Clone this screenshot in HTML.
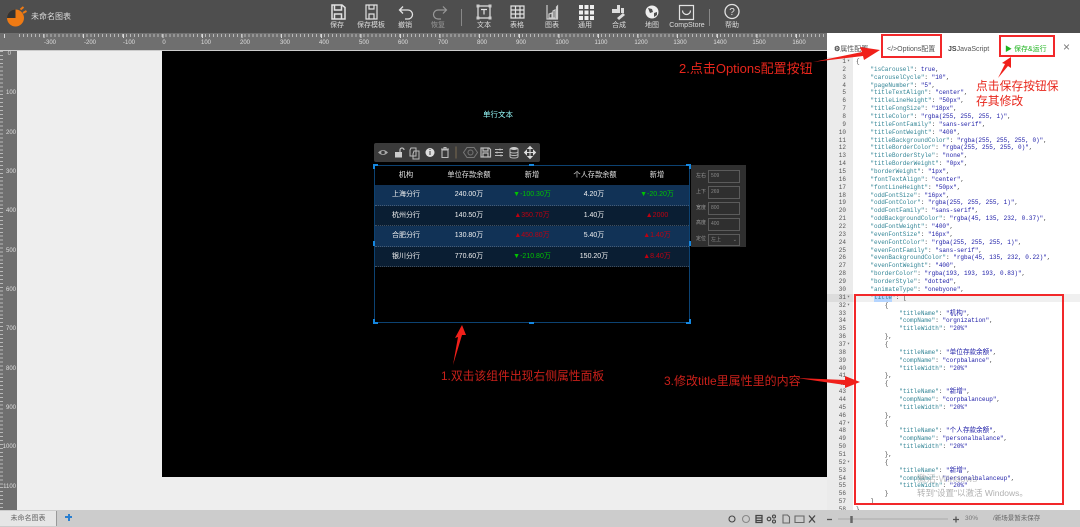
<!DOCTYPE html>
<html lang="zh"><head><meta charset="utf-8"><title>未命名图表</title>
<style>
*{margin:0;padding:0;box-sizing:border-box}
html,body{width:1080px;height:527px;overflow:hidden;background:#eee;font-family:"Liberation Sans","Noto Sans CJK SC",sans-serif}
.a{position:absolute}
#top{left:0;top:0;width:1080px;height:33px;background:#4e4e4e}
.lb{position:absolute;top:21px;font-size:7px;line-height:9px;color:#ddd;transform:translateX(-50%);white-space:nowrap}
#rt{left:0;top:33px;width:827px;height:18px;background:#6f6f6f;border-bottom:1px solid #ccc}
#rt .ticks{position:absolute;left:19px;top:1px;width:808px;height:2.500px;background:repeating-linear-gradient(90deg,#b8b8b8 0 1px,transparent 1px 3.96px)}
#rt .maj{position:absolute;left:3.600px;top:1px;width:823px;height:4px;background:repeating-linear-gradient(90deg,#d8d8d8 0 1px,transparent 1px 39.6px)}
.rl{position:absolute;top:39px;font-size:6px;line-height:8px;color:#ddd;transform:translateX(-50%)}
#rl{left:0;top:51px;width:17px;height:459px;background:#6f6f6f}
#rl .ticks{position:absolute;left:0;top:0;width:3px;height:459px;background:repeating-linear-gradient(180deg,#b8b8b8 0 1px,transparent 1px 3.93px)}
.rv{position:absolute;right:1px;font-size:6px;line-height:8px;color:#ddd}
#cv{left:162px;top:51px;width:665px;height:426px;background:#000}
#panel{left:827px;top:33px;width:253px;height:477px;background:#fff}
.tab{position:absolute;top:12px;font-size:7px;line-height:10px;color:#555;white-space:nowrap}
#gut{left:827px;top:57px;width:26px;height:453px;background:#ebebeb}
pre{position:absolute;font-family:"Liberation Mono","Noto Sans CJK SC",monospace;font-size:6px;line-height:7.86px;white-space:pre}
#nums{left:827px;top:58px;width:19px;text-align:right;color:#555}
#code{left:856px;top:58px;color:#444}
#code i{font-style:normal;color:#318495}
#code b{font-weight:normal;color:#1a1aa6}
#code u{text-decoration:none;font-size:6.600px;line-height:1px}
.tc{position:absolute;transform:translateX(-50%);white-space:nowrap;font-size:7px;line-height:10px;color:#f2f2f2}
.hd{font-size:7.200px;color:#e0e0e0}
.row{position:absolute;left:375px;width:314px;height:20.5px;border-bottom:1px dotted rgba(193,193,193,.3)}
.up{color:#c00010}.dn{color:#00c400}
.pl{position:absolute;left:696px;font-size:5px;line-height:7px;color:#999}
.pi{position:absolute;left:708px;width:32px;height:12.5px;border:1px solid #5b5b5b;font-size:5px;line-height:10px;padding-left:2px;color:#888}
.ann{position:absolute;color:#e8261c;white-space:nowrap;font-family:"Liberation Sans","Noto Sans CJK SC",sans-serif;line-height:15px}
.rbox{position:absolute;border:2px solid #f2282a}
.h{position:absolute;background:#1587e0}
#bot{left:0;top:510px;width:1080px;height:17px;background:#ccc}
</style></head><body>

<div class="a" id="top"></div>
<svg class="a" style="left:5px;top:5px" width="24" height="24" viewBox="0 0 24 24"><circle cx="10.500" cy="13" r="8.500" fill="#ee7a14"/><path d="M10.500 13V4.500A8.500 8.500 0 0 0 2 13z" fill="#333"/><path d="M15.500 4.500l3-2.500M18 8l3.500-2" stroke="#ee7a14" stroke-width="2"/></svg>
<div class="a" style="left:31px;top:12px;font-size:8px;line-height:10px;color:#ddd">未命名图表</div>

<svg class="a" style="left:320px;top:3px" width="430" height="18" viewBox="0 0 430 18" fill="none" stroke="#e2e2e2" stroke-width="1.200">
<path d="M12 2h10l3 2.500V16H12z M14.500 2v5h7V2M14.500 16v-5h7v5" stroke-width="1.500"/>
<path d="M46 2h11v14H46zM49 2v4h5V2M49 16v-5h5v5"/>
<path d="M80 7h8a4.500 4.500 0 0 1 0 9h-3M83 3.500L79.500 7l3.500 3.500" stroke-width="1.300"/>
<path d="M126 7h-8a4.500 4.500 0 0 0 0 9h3M123 3.500l3.500 3.500-3.500 3.500" stroke="#999"/>
<path d="M158 3h12v12h-12z M161 6.500h6M164 6.500v5"/><path d="M156.500 1.500h3v3h-3zM168.500 1.500h3v3h-3zM156.500 13.500h3v3h-3zM168.500 13.500h3v3h-3z" fill="#ccc" stroke="none"/>
<path d="M191 3h13v12h-13zM191 7h13M191 11h13M195.500 3v12M200 3v12"/>
<path d="M227 2v14h11M229 15v-4l3-1v5zM233 15V8l2-1v8zM236.500 15V4l1-1v12z" stroke="#ccc"/>
<path d="M259 2h4v4h-4zM264.500 2h4v4h-4zM270 2h4v4h-4zM259 7.500h4v4h-4zM264.500 7.500h4v4h-4zM270 7.500h4v4h-4zM259 13h4v4h-4zM264.500 13h4v4h-4zM270 13h4v4h-4z" fill="#eee" stroke="none"/>
<path d="M292 6h6v4h-6zM297 2h3v8h-3zM301 5h3v5h-3zM293 11h10M297 15l6-5 2 2-6 5z" fill="#ddd" stroke="none"/>
<circle cx="332" cy="9" r="6.500" fill="#eee" stroke="none"/><path d="M328 5l4 1 1 3-3 1zM334 10l3-1 0 3-3 2z" fill="#4e4e4e" stroke="none"/>
<path d="M359.500 2.500h14v14h-14zM362.500 7.500a4 4 0 0 0 8 0"/>
<circle cx="412" cy="8.500" r="7" stroke-width="1.300"/><text x="412" y="12" font-size="10" fill="#e2e2e2" stroke="none" text-anchor="middle" font-family="Liberation Sans">?</text>
</svg>

<div class="lb" style="left:337px">保存</div><div class="lb" style="left:371px">保存模板</div><div class="lb" style="left:405px">撤销</div><div class="lb" style="left:438px;color:#999">恢复</div><div class="lb" style="left:484px">文本</div><div class="lb" style="left:517px">表格</div><div class="lb" style="left:552px">图表</div><div class="lb" style="left:585px">通用</div><div class="lb" style="left:619px">合成</div><div class="lb" style="left:652px">地图</div><div class="lb" style="left:687px">CompStore</div><div class="lb" style="left:732px">帮助</div>
<div class="a" style="left:461px;top:9px;width:1px;height:17px;background:#888"></div>
<div class="a" style="left:709px;top:9px;width:1px;height:17px;background:#888"></div>

<div class="a" id="rt"><div class="ticks"></div><div class="maj"></div></div>
<div class="rl" style="left:50px">-300</div><div class="rl" style="left:90px">-200</div><div class="rl" style="left:129px">-100</div><div class="rl" style="left:164px">0</div><div class="rl" style="left:206px">100</div><div class="rl" style="left:245px">200</div><div class="rl" style="left:285px">300</div><div class="rl" style="left:324px">400</div><div class="rl" style="left:364px">500</div><div class="rl" style="left:403px">600</div><div class="rl" style="left:443px">700</div><div class="rl" style="left:482px">800</div><div class="rl" style="left:521px">900</div><div class="rl" style="left:562px">1000</div><div class="rl" style="left:601px">1100</div><div class="rl" style="left:641px">1200</div><div class="rl" style="left:680px">1300</div><div class="rl" style="left:720px">1400</div><div class="rl" style="left:759px">1500</div><div class="rl" style="left:799px">1600</div>

<div class="a" id="rl"><div class="ticks"></div>
<div class="rv" style="top:-1px;right:6px">0</div><div class="rv" style="top:38px">100</div><div class="rv" style="top:78px">200</div><div class="rv" style="top:117px">300</div><div class="rv" style="top:156px">400</div><div class="rv" style="top:196px">500</div><div class="rv" style="top:235px">600</div><div class="rv" style="top:274px">700</div><div class="rv" style="top:314px">800</div><div class="rv" style="top:353px">900</div><div class="rv" style="top:392px">1000</div><div class="rv" style="top:432px">1100</div></div>

<div class="a" id="cv"></div>
<div class="tc" style="left:498px;top:110px;font-size:7.500px;color:#9ff">单行文本</div>

<!-- floating toolbar -->
<div class="a" style="left:374px;top:143px;width:166px;height:19px;background:#3a3a3a;border-radius:2px"></div>
<svg class="a" style="left:374px;top:143px" width="166" height="19" viewBox="0 0 166 19" fill="none" stroke="#bbb">
<path d="M4 9.500q5-5 10 0q-5 5-10 0z" fill="#aaa" stroke="none"/><circle cx="9" cy="9.500" r="1.800" fill="#3a3a3a" stroke="none"/>
<path d="M21 9h7v5.500h-7z" fill="#ccc" stroke="none"/><path d="M26 9V7a2 2 0 0 1 4 0" stroke-width="1.300"/>
<path d="M37 5h5v8h-6V7zM40 8h5v8h-6v-5z"/>
<circle cx="56" cy="9.500" r="4.500" fill="#ddd" stroke="none"/><path d="M56 8v4M56 6v1" stroke="#3a3a3a"/>
<g transform="translate(5 0)"><path d="M63 7h6v7.500h-6zM62 6h8M65 6V4.500h2V6" stroke-width="1.100"/></g>
<path d="M82 3.500v12" stroke="#7a6a50"/>
<path d="M93 4.500h7l3.500 5-3.500 5h-7l-3.500-5z" stroke="#777"/><circle cx="96.500" cy="9.500" r="2.500" stroke="#777"/>
<g transform="translate(-3 0)"><path d="M110 5h8l1.500 1.500V14H110zM112 5v3h5V5M112 14v-4h5v4" stroke-width="1.200"/></g>
<g transform="translate(-6 0)"><path d="M127 6.500h8M127 9.500h8M127 12.500h8"/><path d="M132 5.500v2M129 8.500v2M133 11.500v2"/></g>
<g transform="translate(-6 0)"><ellipse cx="146" cy="5.500" rx="4" ry="1.500" fill="#ccc" stroke="none"/><path d="M142 5.500v8c0 2 8 2 8 0v-8M142 8.500c0 2 8 2 8 0M142 11c0 2 8 2 8 0"/></g>
<g transform="translate(-1 0)"><path d="M157 4v11M152 9.500h10M157 3.500l-2 2h4zM157 15.500l-2-2h4zM151.500 9.500l2-2v4zM162.500 9.500l-2-2v4z" fill="#ddd" stroke="#ddd"/></g>
</svg>

<!-- table rows -->
<div class="row" style="top:185px;background:rgba(45,135,232,.37)"></div>
<div class="row" style="top:205.500px;background:rgba(45,135,232,.22)"></div>
<div class="row" style="top:226px;background:rgba(45,135,232,.37)"></div>
<div class="row" style="top:246.500px;background:rgba(45,135,232,.22)"></div>

<!-- selection -->
<div class="a" style="left:374px;top:165px;width:316px;height:158px;border:1px solid #0c4272"></div>
<div class="h" style="left:373px;top:164px;width:5px;height:2px"></div><div class="h" style="left:373px;top:164px;width:2px;height:5px"></div>
<div class="h" style="left:686px;top:164px;width:5px;height:2px"></div><div class="h" style="left:689px;top:164px;width:2px;height:5px"></div>
<div class="h" style="left:373px;top:322px;width:5px;height:2px"></div><div class="h" style="left:373px;top:319px;width:2px;height:5px"></div>
<div class="h" style="left:686px;top:322px;width:5px;height:2px"></div><div class="h" style="left:689px;top:319px;width:2px;height:5px"></div>
<div class="h" style="left:529px;top:164px;width:5px;height:2px"></div><div class="h" style="left:529px;top:322px;width:5px;height:2px"></div>
<div class="h" style="left:373px;top:241px;width:2px;height:5px"></div><div class="h" style="left:689px;top:241px;width:2px;height:5px"></div>

<div class="tc hd" style="left:406px;top:170px">机构</div><div class="tc hd" style="left:469px;top:170px">单位存款余额</div><div class="tc hd" style="left:532px;top:170px">新增</div><div class="tc hd" style="left:595px;top:170px">个人存款余额</div><div class="tc hd" style="left:657px;top:170px">新增</div>

<div class="tc" style="left:406px;top:190px">上海分行</div><div class="tc" style="left:469px;top:190px">240.00万</div><div class="tc dn" style="left:532px;top:190px">▼-100.30万</div><div class="tc" style="left:594px;top:190px">4.20万</div><div class="tc dn" style="left:657px;top:190px">▼-20.20万</div>
<div class="tc" style="left:406px;top:211px">杭州分行</div><div class="tc" style="left:469px;top:211px">140.50万</div><div class="tc up" style="left:532px;top:211px">▲350.70万</div><div class="tc" style="left:594px;top:211px">1.40万</div><div class="tc up" style="left:657px;top:211px">▲2000</div>
<div class="tc" style="left:406px;top:231px">合肥分行</div><div class="tc" style="left:469px;top:231px">130.80万</div><div class="tc up" style="left:532px;top:231px">▲450.80万</div><div class="tc" style="left:594px;top:231px">5.40万</div><div class="tc up" style="left:657px;top:231px">▲1.40万</div>
<div class="tc" style="left:406px;top:252px">银川分行</div><div class="tc" style="left:469px;top:252px">770.60万</div><div class="tc dn" style="left:532px;top:252px">▼-210.80万</div><div class="tc" style="left:594px;top:252px">150.20万</div><div class="tc up" style="left:657px;top:252px">▲8.40万</div>

<!-- mini props -->
<div class="a" style="left:691px;top:165px;width:55px;height:82px;background:#2f2f2f"></div>
<div class="pl" style="top:173px">左右</div><div class="pi" style="top:170px">509</div>
<div class="pl" style="top:189px">上下</div><div class="pi" style="top:186px">269</div>
<div class="pl" style="top:205px">宽度</div><div class="pi" style="top:202px">800</div>
<div class="pl" style="top:220px">高度</div><div class="pi" style="top:218px">400</div>
<div class="pl" style="top:236px">定位</div><div class="pi" style="top:233.500px">左上<span style="position:absolute;right:2px;top:0">⌄</span></div>

<!-- right panel -->
<div class="a" id="panel">
<div class="tab" style="left:7px"><b style="color:#444">⚙</b>属性配置</div>
<div class="tab" style="left:60px">&lt;/&gt;Options配置</div>
<div class="tab" style="left:121px"><b style="color:#444">JS</b>JavaScript</div>
<div class="tab" style="left:178px;color:#1fb41f">▶ 保存&amp;运行</div>
<div class="tab" style="left:236px;top:9px;font-size:12px;color:#777;font-weight:normal">×</div>
</div>
<div class="a" id="gut"></div>
<div class="a" style="left:827px;top:293.500px;width:26px;height:8px;background:#dcdcdc"></div>
<div class="a" style="left:853px;top:293.500px;width:227px;height:8px;background:#f0f0f0"></div>
<div class="a" style="left:874px;top:293.500px;width:18px;height:8px;background:#b5d5ff"></div>
<pre id="nums">1
2
3
4
5
6
7
8
9
10
11
12
13
14
15
16
17
18
19
20
21
22
23
24
25
26
27
28
29
30
31
32
33
34
35
36
37
38
39
40
41
42
43
44
45
46
47
48
49
50
51
52
53
54
55
56
57
58</pre>
<pre class="a" style="left:847px;top:58px;color:#777;font-size:5px">▾<span style="position:absolute;left:0;top:236px">▾</span><span style="position:absolute;left:0;top:244px">▾</span><span style="position:absolute;left:0;top:283px">▾</span><span style="position:absolute;left:0;top:322px">▾</span><span style="position:absolute;left:0;top:362px">▾</span><span style="position:absolute;left:0;top:401px">▾</span></pre>
<pre id="code">{
    <i>"isCarousel"</i>: <b>true</b>,
    <i>"carouselCycle"</i>: <b>"10"</b>,
    <i>"pageNumber"</i>: <b>"5"</b>,
    <i>"titleTextAlign"</i>: <b>"center"</b>,
    <i>"titleLineHeight"</i>: <b>"50px"</b>,
    <i>"titleFongSize"</i>: <b>"18px"</b>,
    <i>"titleColor"</i>: <b>"rgba(255, 255, 255, 1)"</b>,
    <i>"titleFontFamily"</i>: <b>"sans-serif"</b>,
    <i>"titleFontWeight"</i>: <b>"400"</b>,
    <i>"titleBackgroundColor"</i>: <b>"rgba(255, 255, 255, 0)"</b>,
    <i>"titleBorderColor"</i>: <b>"rgba(255, 255, 255, 0)"</b>,
    <i>"titleBorderStyle"</i>: <b>"none"</b>,
    <i>"titleBorderWeight"</i>: <b>"0px"</b>,
    <i>"borderWeight"</i>: <b>"1px"</b>,
    <i>"fontTextAlign"</i>: <b>"center"</b>,
    <i>"fontLineHeight"</i>: <b>"50px"</b>,
    <i>"oddFontSize"</i>: <b>"16px"</b>,
    <i>"oddFontColor"</i>: <b>"rgba(255, 255, 255, 1)"</b>,
    <i>"oddFontFamily"</i>: <b>"sans-serif"</b>,
    <i>"oddBackgroundColor"</i>: <b>"rgba(45, 135, 232, 0.37)"</b>,
    <i>"oddFontWeight"</i>: <b>"400"</b>,
    <i>"evenFontSize"</i>: <b>"16px"</b>,
    <i>"evenFontColor"</i>: <b>"rgba(255, 255, 255, 1)"</b>,
    <i>"evenFontFamily"</i>: <b>"sans-serif"</b>,
    <i>"evenBackgroundColor"</i>: <b>"rgba(45, 135, 232, 0.22)"</b>,
    <i>"evenFontWeight"</i>: <b>"400"</b>,
    <i>"borderColor"</i>: <b>"rgba(193, 193, 193, 0.83)"</b>,
    <i>"borderStyle"</i>: <b>"dotted"</b>,
    <i>"animateType"</i>: <b>"onebyone"</b>,
    <i>"title"</i>: [
        {
            <i>"titleName"</i>: <b>"<u>机构</u>"</b>,
            <i>"compName"</i>: <b>"orgnization"</b>,
            <i>"titleWidth"</i>: <b>"20%"</b>
        },
        {
            <i>"titleName"</i>: <b>"<u>单位存款余额</u>"</b>,
            <i>"compName"</i>: <b>"corpbalance"</b>,
            <i>"titleWidth"</i>: <b>"20%"</b>
        },
        {
            <i>"titleName"</i>: <b>"<u>新增</u>"</b>,
            <i>"compName"</i>: <b>"corpbalanceup"</b>,
            <i>"titleWidth"</i>: <b>"20%"</b>
        },
        {
            <i>"titleName"</i>: <b>"<u>个人存款余额</u>"</b>,
            <i>"compName"</i>: <b>"personalbalance"</b>,
            <i>"titleWidth"</i>: <b>"20%"</b>
        },
        {
            <i>"titleName"</i>: <b>"<u>新增</u>"</b>,
            <i>"compName"</i>: <b>"personalbalanceup"</b>,
            <i>"titleWidth"</i>: <b>"20%"</b>
        }
    ]
}</pre>

<div class="a" style="left:917px;top:473px;font-size:9.500px;line-height:13px;color:rgba(150,150,150,.55);white-space:nowrap">激活 Windows</div>
<div class="a" style="left:917px;top:487px;font-size:8.500px;line-height:12px;color:rgba(150,150,150,.75);white-space:nowrap">转到"设置"以激活 Windows。</div>

<!-- bottom bar -->
<div class="a" id="bot"></div>
<div class="a" style="left:0;top:511px;width:57px;height:15px;background:#e6e6e6;border-right:1px solid #999;font-size:7px;line-height:15px;text-align:center;color:#666">未命名图表</div>
<div class="a" style="left:65px;top:516px;width:7px;height:2px;background:#2a7fd0"></div><div class="a" style="left:67.500px;top:513.500px;width:2px;height:7px;background:#2a7fd0"></div>
<svg class="a" style="left:725px;top:512px" width="235" height="14" viewBox="0 0 235 14" fill="none" stroke="#444" stroke-width="1.100">
<circle cx="7" cy="7" r="3"/>
<ellipse cx="21" cy="7" rx="3.500" ry="3.500" stroke="#888"/>
<path d="M31 3.500h6v7h-6zM31 6h6M31 8.500h6" stroke-width="1.300"/>
<circle cx="44" cy="7" r="1.800"/><circle cx="49" cy="4.500" r="1.500"/><circle cx="49" cy="9.500" r="1.500"/>
<path d="M58 3h4.500l2 2v6H58z" stroke="#666"/>
<path d="M70 4h9v6.500h-9z" stroke="#666"/>
<path d="M84 3.500l6 7M90 3.500l-6 7" stroke-width="1.300"/>
<path d="M102 7.500h5" stroke="#555" stroke-width="1.300"/>
<path d="M113 7h110" stroke="#aaa"/>
<path d="M126.500 4v7" stroke="#666" stroke-width="2.500"/>
<path d="M228 7.500h6M231 4.500v6" stroke="#555" stroke-width="1.300"/>
</svg>
<div class="a" style="left:965px;top:514px;font-size:6.500px;line-height:9px;color:#777">30%</div>
<div class="a" style="left:993px;top:514px;font-size:6.500px;line-height:9px;color:#666;white-space:nowrap">/新场景暂未保存</div>

<!-- annotations -->
<div class="rbox" style="left:881px;top:33.500px;width:61px;height:24px"></div>
<div class="rbox" style="left:999px;top:35px;width:56px;height:22px"></div>
<div class="rbox" style="left:854px;top:294px;width:210px;height:211px"></div>
<svg class="a" style="left:0;top:0" width="1080" height="527" viewBox="0 0 1080 527">
<path d="M453 365L458 337L455 338L462 325L466 335L462 335z" fill="#f0201a"/>
<path d="M813 62L862 52L860 47L880 50L864 60L863 56z" fill="#f0201a"/>
<path d="M797 378L845 380L845 376L860 382L845 388L845 385z" fill="#f0201a"/>
<path d="M998 78L1005 64L1002 63L1011 57L1011 68L1008 66z" fill="#f0201a"/>
</svg>
<div class="ann" style="left:679px;top:61px;font-size:13px">2.点击Options配置按钮</div>
<div class="ann" style="left:976px;top:79px;font-size:11.800px">点击保存按钮保</div>
<div class="ann" style="left:976px;top:94px;font-size:11.800px">存其修改</div>
<div class="ann" style="left:441px;top:369px;font-size:11.800px;color:#c9201a">1.双击该组件出现右侧属性面板</div>
<div class="ann" style="left:664px;top:374px;font-size:12px;color:#c9201a">3.修改title里属性里的内容</div>
</body></html>
